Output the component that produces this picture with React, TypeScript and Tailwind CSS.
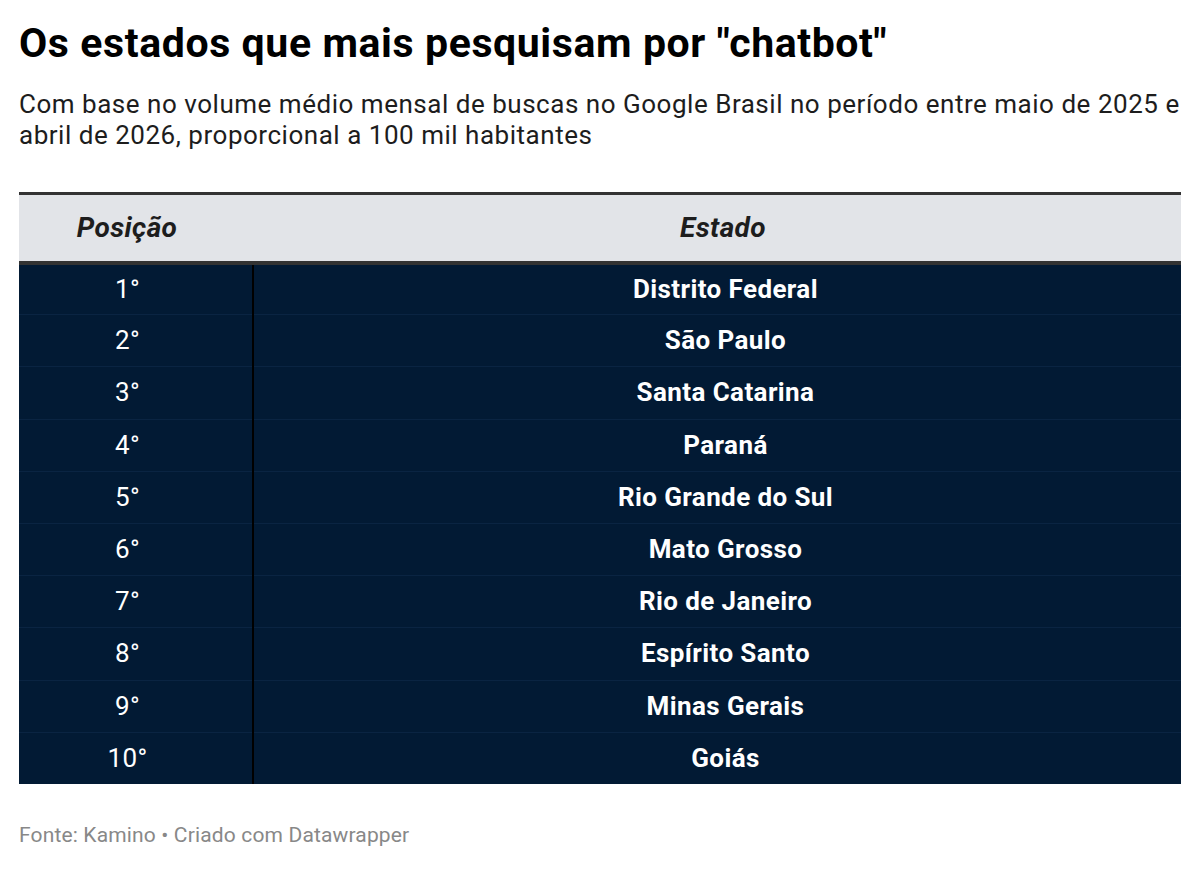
const rows = [
  "Distrito Federal",
  "São Paulo",
  "Santa Catarina",
  "Paraná",
  "Rio Grande do Sul",
  "Mato Grosso",
  "Rio de Janeiro",
  "Espírito Santo",
  "Minas Gerais",
  "Goiás",
];

export default function App() {
  return (
    <div className="min-h-screen bg-white px-[19px] pt-[19px] font-['Roboto',sans-serif]">
      <h1 className="text-[41px] font-bold leading-[48px] tracking-[0.6px] text-black">
        Os estados que mais pesquisam por "chatbot"
      </h1>
      <p className="mt-[22px] text-[26px] leading-[31px] tracking-[0.52px] text-[#1d1d1d]">
        Com base no volume médio mensal de buscas no Google Brasil no período entre maio de 2025 e
        abril de 2026, proporcional a 100 mil habitantes
      </p>

      <table className="mt-[41px] w-full border-collapse">
        <thead>
          <tr className="border-t-[3px] border-b-4 border-[#333333] bg-[#e2e4e8]">
            <th className="h-[69px] w-[234px] text-center text-[28px] font-bold italic tracking-[0.4px] text-[#1d1d1d]">
              <span className="-ml-[18px]">Posição</span>
            </th>
            <th className="h-[69px] text-center text-[28px] font-bold italic tracking-[0.4px] text-[#1d1d1d]">
              <span className="ml-[12px]">Estado</span>
            </th>
          </tr>
        </thead>
        <tbody className="bg-[#021a34] text-white">
          {rows.map((name, i) => (
            <tr key={name} className="border-b border-[#0a2442] last:border-b-0">
              <td className="h-[52.2px] border-r-2 border-r-black text-center text-[26px] tracking-[0.4px]">
                <span className="-ml-[16px]">{i + 1}°</span>
              </td>
              <td className="h-[52.2px] text-center text-[26px] font-bold tracking-[0.4px]">
                <span className="ml-[16px]">{name}</span>
              </td>
            </tr>
          ))}
        </tbody>
      </table>

      <p className="mt-[37px] text-[21px] leading-[28px] tracking-[0.15px] text-[#888888]">
        Fonte: Kamino • Criado com Datawrapper
      </p>
    </div>
  );
}
